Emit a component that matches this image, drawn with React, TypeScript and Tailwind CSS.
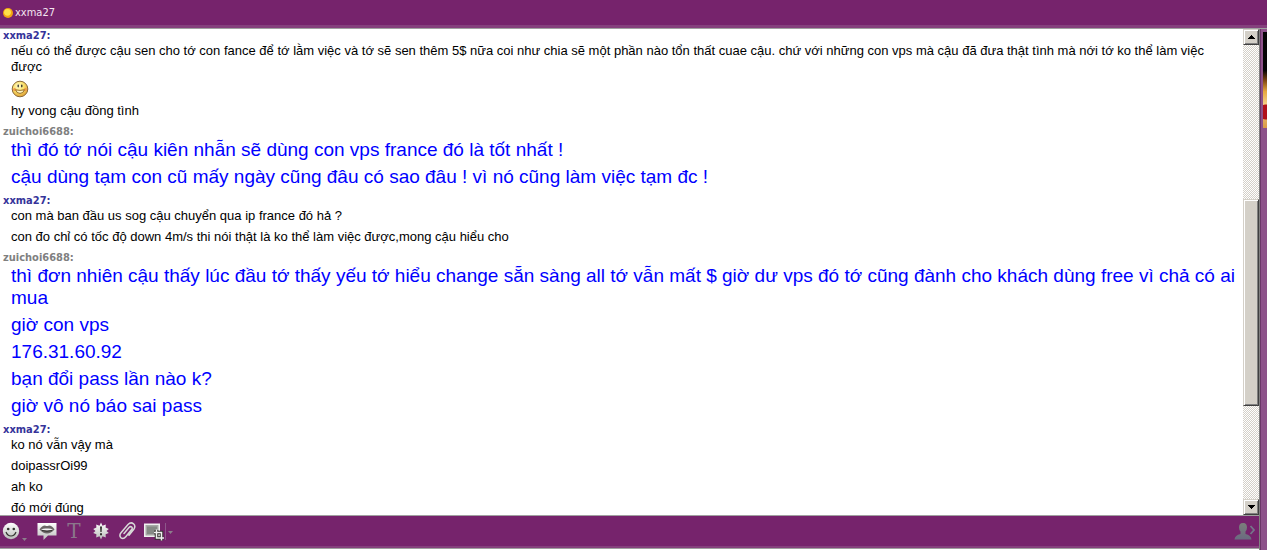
import React from "react";

type Turn = { name: string; own: boolean; messages: string[] };

const SMILE = ":)";

const turns: Turn[] = [
  {
    name: "xxma27",
    own: false,
    messages: [
      "nếu có thể được cậu sen cho tớ con fance để tớ lằm việc và tớ sẽ sen thêm 5$ nữa coi như chia sẽ một phần nào tổn thất cuae cậu. chứ với những con vps mà cậu đã đưa thật tình mà nới tớ ko thể làm việc được",
      SMILE,
      "hy vong cậu đồng tình",
    ],
  },
  {
    name: "zuichoi6688",
    own: true,
    messages: [
      "thì đó tớ nói cậu kiên nhẫn sẽ dùng con vps france đó là tốt nhất !",
      "cậu dùng tạm con cũ mấy ngày cũng đâu có sao đâu ! vì nó cũng làm việc tạm đc !",
    ],
  },
  {
    name: "xxma27",
    own: false,
    messages: [
      "con mà ban đầu us sog cậu chuyển qua ip france đó hả ?",
      "con đo chỉ có tốc độ down 4m/s thi nói thật là ko thể làm việc được,mong cậu hiểu cho",
    ],
  },
  {
    name: "zuichoi6688",
    own: true,
    messages: [
      "thì đơn nhiên cậu thấy lúc đầu tớ thấy yếu tớ hiểu change sẵn sàng all tớ vẫn mất $ giờ dư vps đó tớ cũng đành cho khách dùng free vì chả có ai mua",
      "giờ con vps",
      "176.31.60.92",
      "bạn đổi pass lần nào k?",
      "giờ vô nó báo sai pass",
    ],
  },
  {
    name: "xxma27",
    own: false,
    messages: ["ko nó vẫn vậy mà", "doipassrOi99", "ah ko", "đó mới đúng"],
  },
];

function Smiley() {
  return (
    <svg className="block" width="18" height="18" viewBox="0 0 18 18" role="img" aria-label="smile">
      <defs>
        <radialGradient id="face" cx="40%" cy="32%" r="65%">
          <stop offset="0" stopColor="#fffbd0" />
          <stop offset="0.5" stopColor="#fbe470" />
          <stop offset="1" stopColor="#e2a83a" />
        </radialGradient>
      </defs>
      <circle cx="9" cy="9" r="7.8" fill="url(#face)" stroke="#8a6a3a" />
      <ellipse cx="7.2" cy="6" rx="0.7" ry="1.4" fill="#222" />
      <ellipse cx="10.8" cy="6" rx="0.7" ry="1.4" fill="#222" />
      <circle cx="3.6" cy="9.6" r="1.5" fill="#f19a4a" />
      <circle cx="14.4" cy="9.6" r="1.5" fill="#f19a4a" />
      <path d="M4.6 9.800Q9 11 13.4 9.800Q12.4 13.4 9 13.4Q5.600 13.4 4.6 9.800Z" fill="#fff6c4" stroke="#80530f" strokeWidth="0.8" />
    </svg>
  );
}

function Arrow({ down = false }: { down?: boolean }) {
  return (
    <svg width="7" height="4" viewBox="0 0 7 4" shapeRendering="crispEdges" aria-hidden="true">
      {down ? <path d="M0 0H7V1H6V2H5V3H4V4H3V3H2V2H1V1H0Z" /> : <path d="M3 0H4V1H5V2H6V3H7V4H0V3H1V2H2V1H3Z" />}
    </svg>
  );
}

const bevel =
  "border border-t-[#d4d0c8] border-l-[#d4d0c8] border-b-[#404040] border-r-[#404040] bg-[#d4d0c8] shadow-[inset_1px_1px_0_#fff,inset_-1px_-1px_0_#808080]";

function ScrollBar() {
  return (
    <div className="flex w-4 shrink-0 flex-col bg-[repeating-conic-gradient(#d4d0c8_0_25%,#fff_0_50%)] bg-[length:2px_2px]">
      <button aria-label="Scroll up" className={`flex h-4 items-center justify-center ${bevel}`}>
        <Arrow />
      </button>
      <div className="grow-[154]" />
      <div className={`grow-[205] ${bevel}`} />
      <div className="grow-[93]" />
      <button aria-label="Scroll down" className={`flex h-4 items-center justify-center ${bevel}`}>
        <Arrow down />
      </button>
    </div>
  );
}

function Toolbar() {
  return (
    <div className="flex h-[31px] shrink-0 items-center border-t border-[#a0a0a0] bg-[#76236c] pr-1 pl-0.5">
      <svg width="0" height="0" className="absolute" aria-hidden="true">
        <defs>
          <linearGradient id="silver" x1="0" y1="0" x2="0" y2="1">
            <stop offset="0" stopColor="#ffffff" />
            <stop offset="1" stopColor="#b9bcb9" />
          </linearGradient>
          <linearGradient id="dim" x1="0" y1="0" x2="0" y2="1">
            <stop offset="0" stopColor="#7b7f7b" />
            <stop offset="1" stopColor="#6a6a80" />
          </linearGradient>
        </defs>
      </svg>
      <button aria-label="Emoticons" className="mr-2 flex items-center">
        <svg width="27" height="20" viewBox="0 0 27 20">
          <circle cx="9" cy="10" r="8.2" fill="url(#silver)" />
          <circle cx="6.2" cy="8" r="1.3" fill="#33332f" />
          <circle cx="11.8" cy="8" r="1.3" fill="#33332f" />
          <path d="M4 11Q5.500 15 9 15Q12.500 15 14 11" fill="none" stroke="#33332f" strokeWidth="1.2" />
          <path d="M20 17h5l-2.500 3z" fill="#8c7e8c" />
        </svg>
      </button>
      <button aria-label="Audibles" className="mr-2.5">
        <svg className="block" width="20" height="20" viewBox="0 0 20 20">
          <path d="M.5 2H19.500V14.500H11L6.500 19V14.500H.5Z" fill="url(#silver)" />
          <path d="M2.500 8.500Q5 4.500 8 4.500Q10 5.500 12 4.500Q15 4.500 17.500 8.500Q14 12.500 10 12.500Q6 12.500 2.500 8.500Z" fill="#6b6666" />
          <path d="M4 8.500Q7 7 10 7.500Q13 7 16 8.500Q13 9.500 10 9.500Q7 9.500 4 8.500Z" fill="#f2f2f2" />
          <path d="M5 9.500Q10 11 15 9.500" fill="none" stroke="#33332f" />
        </svg>
      </button>
      <button
        aria-label="Text format"
        className="mr-3 w-3.5 font-['DejaVu_Serif',serif] text-[20px] leading-5 text-[#8b778b]"
      >
        T
      </button>
      <button aria-label="Buzz" className="mr-2.5">
        <svg className="block" width="16" height="20" viewBox="0 0 16 20">
          <path d="M8 1.500L9.500 4.800L12.800 3.400L12.600 6.600L15.800 8L13.500 10L15.800 12L12.600 13.200L12.800 16.400L9.500 15.200L8 18.500L6.500 15.200L3.200 16.400L3.400 13.200L.2 12L2.500 10L.2 8L3.400 6.600L3.200 3.400L6.500 4.800Z" fill="url(#silver)" />
          <path d="M7 5.500h2l-.4 5.500h-1.200zM7 12.200h2v2h-2z" fill="#33332f" />
        </svg>
      </button>
      <button aria-label="Attach file" className="mr-2">
        <svg className="block" width="17" height="20" viewBox="0 0 17 20" fill="none" stroke="#d8dad8" strokeWidth="1.5" strokeLinecap="round">
          <path d="M5 12.500L10 6.500Q11.500 5 12.700 6Q13.800 7.200 12.600 8.600L7 15.500Q4.500 18.500 2 16.800Q-.2 14.500 2 11.800L9 3.500Q11.800.7 14.500 2.800Q17 5.200 14.800 8.300L10 14.300" />
        </svg>
      </button>
      <button aria-label="Share photo">
        <svg className="block" width="30" height="20" viewBox="0 0 30 20">
          <rect x="0.75" y="3.25" width="14.500" height="12" fill="#a5a7a5" stroke="#f0f0f0" strokeWidth="1.5" />
          <rect x="3" y="5.500" width="10" height="7.500" fill="#858985" />
          <path d="M12.500 9v8h7M10 11.500h7.500v8" fill="none" stroke="#33332f" strokeWidth="3.500" />
          <path d="M12.500 8.500v8.500h7.500M10 11.500h7.500v8" fill="none" stroke="#f0f0f0" strokeWidth="1.500" />
          <path d="M21.500 2v17" stroke="#8d578a" />
          <path d="M24 10h5l-2.500 3z" fill="#8c7e8c" />
        </svg>
      </button>
      <button aria-label="Contact details" className="ml-auto">
        <svg className="block" width="21" height="18" viewBox="0 0 21 18">
          <path d="M9 1C6 1 5 3 5 5.500Q5 8 6.500 9.500V12Q1 13 .5 17.500H17.500Q17 13 11.500 12V9.500Q13 8 13 5.500C13 3 12 1 9 1Z" fill="url(#dim)" />
          <path d="M16.500 4l3.500 4l-3.500 4" fill="none" stroke="#75758a" strokeWidth="1.800" />
        </svg>
      </button>
    </div>
  );
}

export default function App() {
  return (
    <div className="flex h-screen flex-col overflow-hidden bg-[#76236c]">
      <header className="flex h-[25px] shrink-0 items-center gap-0.5 pl-[3px]">
        <svg width="10" height="10" viewBox="0 0 10 10" aria-hidden="true">
          <circle cx="5" cy="5" r="5" fill="#f2a512" />
          <circle cx="4.500" cy="4.300" r="3.400" fill="#ffe04a" />
        </svg>
        <h1 className="font-['DejaVu_Sans_Condensed','DejaVu_Sans',sans-serif] text-[11px] leading-4 text-[#f3e6f1]">
          xxma27
        </h1>
      </header>
      <div className="h-1 shrink-0 border-b border-[#a0a0a0] bg-[#85407d]" />
      <div className="flex min-h-0 grow">
        <div className="flex min-w-0 grow flex-col">
          <main className="flex min-h-0 grow bg-white">
            <div className="flex min-w-0 grow flex-col gap-1.5 overflow-hidden">
              {turns.map((turn, t) => (
                <section key={t} className="shrink-0">
                  <h2
                    className={`pl-[3px] font-['DejaVu_Sans_Condensed','DejaVu_Sans',sans-serif] text-[11px] leading-[14px] font-bold ${turn.own ? "text-[#808080]" : "text-[#36339a]"}`}
                  >
                    {turn.name}:
                  </h2>
                  <div
                    className={`flex flex-col gap-[5px] pl-[11px] font-['Liberation_Sans',sans-serif] ${turn.own ? "pr-1 text-[19px] leading-[22px] text-[#0000ff]" : "pr-5 text-[13px] leading-4 text-black"}`}
                  >
                    {turn.messages.map((m, i) => (m === SMILE ? <Smiley key={i} /> : <p key={i}>{m}</p>))}
                  </div>
                </section>
              ))}
            </div>
            <ScrollBar />
          </main>
          <Toolbar />
          <div className="h-[3px] shrink-0 border-b border-[#a0a0a0] bg-[#85407d]" />
          <textarea aria-label="Message" className="block h-px w-full shrink-0 resize-none bg-white outline-none" />
        </div>
        <aside className="w-2 shrink-0 border-l border-[#808080] bg-[#8d528a] pt-[3px] shadow-[inset_1px_0_0_#6b3568]">
          <div className="ml-[3px] h-24 bg-[radial-gradient(circle_at_3px_80px,#b0101a_0_7px,transparent_8px),linear-gradient(#050505_0_40%,#7a4310_50%,#e6a840_62%,#f3cf86_75%,#d99a45)]" />
        </aside>
      </div>
    </div>
  );
}
